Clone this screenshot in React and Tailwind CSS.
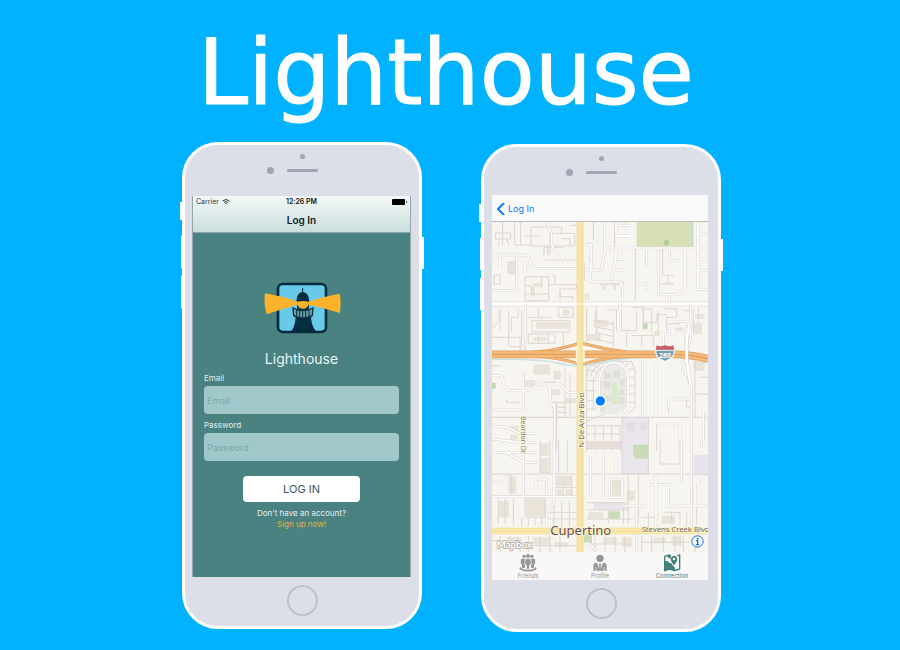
import React from "react";

const PARK = "M470 244H638V318H470Z";

function Roads({ d, width = 8 }) {
  return (
    <g fill="none" strokeLinejoin="round">
      <path d={d} stroke="#d8cfd0" strokeWidth={width} />
      <path d={d} stroke="#ffffff" strokeWidth={width - 3} />
    </g>
  );
}

function Lots({ d }) {
  return <path d={d} fill="none" stroke="#e0d4d2" strokeWidth="3" />;
}

function Buildings({ d }) {
  return <path d={d} fill="#e9e3da" />;
}

function CityMap() {
  return (
    <svg viewBox="36 244 648 990" className="block w-full" role="img" aria-label="Map of Cupertino">
      <defs>
        <pattern id="grass" width="14" height="14" patternUnits="userSpaceOnUse">
          <path d="M0 0H14V14H0Z" fill="#d9e1b8" />
          <path d="M1 3h4M8 6h4M3 11h3M10 12h3" stroke="#c9d6a6" strokeWidth="2" />
        </pattern>
      </defs>
      <path d="M36 244H684V1236H36Z" fill="#f7f5f0" />

      <path d={PARK} fill="url(#grass)" />
      <path d="M638 244V318" stroke="#b9dbe0" strokeWidth="5" />
      <circle cx="559" cy="306" r="8" fill="#afcc96" />

      {/* north of the cross street */}
      <Buildings d="M160 427h27v11h-27zM153 440h12v28h-12zM86 364h18v34H86zM200 322h12v22h-12zM248 506h20v18h-20zM358 427h28v8h-10v14h-8v-14h-10zM390 427h28v8h-10v14h-8v-14h-10zM540 426h42v7h-42zM645 520h28v14h-28z" />
      <Lots d="M46 277h46v18H46zM60 295l-6 22M80 295l8 22M68 244V315M104 244V313H122V244M153 259H245V278H284V316H153ZM135 286H177M123 313H152M210 316V278H245M244 294H270V316M272 254H290M192 348V320H250M194 358H290M42 403H60V430H42ZM84 364H105V398H84ZM135 408H206V480H135ZM206 460H135M138 435H154V460M185 408V440M206 432H290V445H240V468H278V485M216 404H224V432M240 452V486M313 366V420M320 390H366M376 244V317M340 244V300M466 322V480M404 244V320M374 330L362 382M335 320L328 365M430 420V484M420 244H445M548 326V404H582M564 404V430M60 505V570M115 505V530H94V575M135 490V530H215M175 505V530M236 500H280V530H236ZM316 462H326V476H316ZM350 495V575M380 508H410V575M455 500H490V570M484 505H515V575M535 510V575M550 504H590V530H560V575M610 510H640V575M655 500V575M320 500V575M36 590H120V640H36M135 600V650" />
      <Roads d="M36 343H140Q150 346 150 370L162 384H295M60 346V382M110 346V450H36M135 372V400M200 244L215 280V310Q218 326 235 335Q256 345 256 378M374 244V322H684M408 244V284H450M408 254H450M408 288H450M316 346H334V312H316M335 346L330 420L345 424H420L428 432V484M376 322L364 388H320M408 324V345L395 420M408 356H435M402 388H435M500 322V380M470 430H500V450M535 322V462H592L615 442V324M568 322V360H590V355M568 462V484M654 322V446H684M654 355H684M654 390H684M654 244V320M654 280H684" />
      <Roads width={13} d="M36 490H684" />
      <Roads d="M420 490V508H414V575M632 490V590L606 700M136 490V600" />

      {/* around the freeway */}
      <g transform="translate(0 510)">
        <Buildings d="M168 34h98v20h-98zM160 80h40v10h-40zM160 162h50v30h-50zM220 180h24v26h-24zM135 208h30v22h-30zM190 212h40v10h-40zM208 236h32v18h-32zM258 262h30v16h-30zM90 345h26v16H90zM90 372h24v18H90zM340 28h45v20h-45zM322 70h40v20h-40zM522 60h18v16h-18zM586 50h24v12h-24zM642 36h24v34h-24zM640 150h34v30h-34z" />
        <Lots d="M86 0V105M58 0V30L36 55M125 0V108H86M145 70H225V98H145ZM175 70V98M205 70V98M156 30H270V64H156ZM250 64V104M320 0V108M345 0L345 30L400 40M345 48L400 60M345 65L400 78M345 85L400 98M400 30V108M425 0V60H470V0M440 60V108M455 75H520V108M485 75V108M490 0V35H530V12H560M560 40H600M36 320H684M255 165V320M270 190V320M215 275H260M215 290H260M215 305H260M215 320H260M230 275V420M320 160V420M505 320V420M645 150V320M660 200H684M645 250H684M530 340V420M600 340V420M320 345H420V420M320 370H420M320 395H420M345 345V420M370 345V420M395 345V420M566 310V265H634M620 265V290H634M80 265V275H120M36 165H60M320 332L400 300" />
        <path d="M360 310L362 210Q370 160 400 160Q438 162 442 210V285L410 312Z" fill="#ebeae6" />
        <path d="M396 215h16v66h-16zM362 250h12v50h-12z" fill="#dbe8ca" />
        <path d="M372 185h20v20h-20zM400 180h20v22h-20zM420 205h14v22h-14zM370 212h22v22h-22zM416 235h16v18h-16zM415 260h18v20h-18zM376 255h18v16h-18z" fill="#dfe0dc" />
        <Lots d="M320 200Q325 155 360 152H455L465 180V290L445 310M330 200Q340 165 375 155M345 202Q352 170 385 160M320 210H350M320 240H350M320 270H350M320 295H350M340 200V300M320 175L350 185M330 160L358 172M445 175H462M445 200H462M445 225H462M445 250H462M445 275H462M430 155L425 165M445 155L435 170" />
        <Roads d="M358 300V210Q365 155 402 155Q442 158 444 210V285L430 308" />
        <path d="M426 320H505V490H426Z" fill="#ebe6ee" />
        <path d="M426 320H505V490H426Z" fill="none" stroke="#ddd3e0" strokeWidth="3" />
        <path d="M440 335h25v25h-25zM480 335h18v25h-18z" fill="#e2dee3" />
        <path d="M460 402h42v40h-36l-6-8zM488 38h15v16h-15zM36 216h11v18H36z" fill="#c3d9b4" />
        <Roads d="M36 195H60Q72 200 72 225L85 240H150Q165 230 170 220H240L265 245H290M130 185V300M36 298H130M36 346L80 350L130 372M130 368H170M36 385L120 395M130 395H165M210 228V270L224 290V420M488 150V320M528 150V320M566 290V265H634M550 108V72H568V50M606 150L628 215L634 230V420M628 40L616 60V120M580 32H620M670 300V390M600 340V420M530 340H600" />
        <path d="M36 146Q180 144 240 158Q300 174 350 158Q460 136 540 137Q620 136 684 155" fill="none" stroke="#c9e1e2" strokeWidth="5" />
        <path d="M160 124Q230 120 302 97Q370 115 440 124M160 137Q230 138 302 162Q370 142 440 137" fill="none" stroke="#df9d5d" strokeWidth="9" />
        <path d="M160 124Q230 120 302 97Q370 115 440 124M160 137Q230 138 302 162Q370 142 440 137" fill="none" stroke="#f4b978" strokeWidth="5" />
        <path d="M36 131H520Q620 128 684 144" fill="none" stroke="#e0a060" strokeWidth="23" />
        <path d="M36 131H520Q620 128 684 144" fill="none" stroke="#f4b978" strokeWidth="19" />
        <path d="M36 131H520Q620 128 684 144" fill="none" stroke="#dc995c" strokeWidth="3" />
        <Roads width={11} d="M628 40L620 90V150L632 225" />
      </g>

      {/* downtown */}
      <g transform="translate(0 900)">
        <Buildings d="M180 8h26v38h-26zM180 52h26v42h-26zM228 106h20v30h-20zM252 106h22v30h-22zM138 172h58v55h-58zM85 108h24v50H85zM55 180h32v50H55zM230 145h18v24h-18zM256 145h22v24h-22zM325 215h45v18h-45zM395 115h28v55h-28zM440 150h25v30h-25zM545 225h40v24h-40zM80 290h45v30H80zM160 290h52v22h-52zM225 305h40v14h-40zM370 290h40v18h-40zM425 290h30v28h-30zM520 290h36v18h-36zM575 285h30v30h-30zM320 0h98v22h-98z" />
        <path d="M340 186H434V208H340ZM640 42H684V104H640Z" fill="#e9e3ec" />
        <path d="M462 12h42v42h-36l-6-8zM386 212h34v22h-34zM312 282h24v24h-24z" fill="#c9dbb6" />
        <Lots d="M36 100H684M180 0V96H210V0M236 0V100M262 0V96M320 0V24H422V0M320 8H422M320 16H422M505 0V100M540 0V70H600V0M634 0V260M75 104H95V170M55 172V250M75 172V250M100 172V255M135 170H196V230H135ZM125 230V255M145 230V255M165 230V255M185 230V255M205 215H290M205 235H290M222 180V260M245 180V260M268 180V260M222 140H290M250 104V170M275 104V170M320 186H440V208H320M320 235H460M385 208V250M430 208V250M445 104V250M475 104V250M485 230H530V258M505 215V258M550 215H600V250M575 215V250M620 215V260M650 200V250M36 300H120V335M60 285V335M90 285V335M145 285V335M145 315H290M180 285V335M210 285V335M240 285V335M345 285V335M320 310H460M375 285V335M405 285V335M435 285V335M485 285V335M485 305H630M515 285V335M550 285V335M585 285V335M610 285V335M645 285V335" />
        <Roads d="M36 35H170M80 35L130 65H170M130 0V165M36 168H295M36 124H65M222 0V185L200 220V255M168 150V115H200V160M332 48V170M370 48V170M408 48V100M388 115V170H426V115H388M434 196H498M510 132H565V196H684M528 104V255M604 0V125M634 0V280M645 125V196M665 110V130M470 210V330M320 305L350 330M665 0V20" />
        <path d="M36 271H684" stroke="#e6d595" strokeWidth="20" />
        <path d="M36 271H684" stroke="#fbe9aa" strokeWidth="16" />
        <path d="M36 271H684" stroke="#ead58c" strokeWidth="2" />
      </g>

      <path d="M300 244V1236" stroke="#e8d596" strokeWidth="20" />
      <path d="M300 244V1236" stroke="#fbe8a8" strokeWidth="16" />
      <path d="M300 244V1236M306 244V1236" stroke="#ead58d" strokeWidth="1" />
      <path d="M292 490H308M290 616V666M312 616V666" stroke="#fff8d8" strokeWidth="5" />

      {/* route shield */}
      <g stroke="#f7f5f0" strokeWidth="4">
        <path d="M530 615Q542 622 555 614Q568 622 580 615Q589 640 572 654L555 663L538 654Q521 640 530 615Z" fill="#6fa1b6" />
        <path d="M530 614Q542 620 555 613Q568 620 580 614L583 628H527Z" fill="#c85d68" stroke="none" />
        <path d="M526 629H584" strokeWidth="3" />
      </g>
      <text x="555" y="651" textAnchor="middle" fill="#ffffff" fontSize="21" className="font-['Open_Sans',sans-serif] font-bold">280</text>

      <g className="font-['Noto_Sans',sans-serif]" stroke="#fbf6df" strokeWidth="4" paintOrder="stroke">
        <text transform="translate(312 921) rotate(-90)" fontSize="23" fill="#766b4e">N De Anza Blvd</text>
        <text transform="translate(124 826) rotate(90)" fontSize="21" fill="#8b8368">Beardon Dr</text>
        <text x="211" y="1182" fontSize="39" fill="#694c50">Cupertino</text>
        <text x="485" y="1175" fontSize="23" fill="#766b4e">Stevens Creek Blvd</text>
      </g>
      <text x="50" y="1223" fontSize="29" fill="#ffffff" stroke="#aaa7a2" strokeWidth="4" paintOrder="stroke" className="font-['Lato',sans-serif] font-bold">Mapbox</text>

      <circle cx="361" cy="781" r="19" fill="#ffffff" stroke="#e2e2e2" strokeWidth="1" />
      <circle cx="361" cy="781" r="14" fill="#087dff" />
    </svg>
  );
}

function LighthouseLogo() {
  return (
    <svg viewBox="0 0 240 156" className="block h-[52px] w-20" aria-hidden="true">
      <rect x="48" y="6" width="144" height="144" rx="14" fill="#68cae8" stroke="#052d40" strokeWidth="8" />
      <path d="M88 148Q101 130 101 102H147Q147 130 162 148Z" fill="#052d40" />
      <path d="M122 18V34" stroke="#052d40" strokeWidth="3" />
      <path d="M103 58Q104 32 122 30Q141 32 142 58Z" fill="#052d40" />
      <path d="M105 56H141V84H105Z" fill="#10394a" />
      <path d="M93 78Q122 94 153 78L151 101Q122 116 95 101Z" fill="#6a9fa5" stroke="#052d40" strokeWidth="4" />
      <path d="M104 84V105M113 87V108M122 88V109M131 87V108M141 84V105" stroke="#052d40" strokeWidth="3" />
      <path d="M9 34Q60 42 108 59Q123 55 138 59Q190 43 233 35Q239 64 233 93Q185 77 140 68Q134 80 123 80Q112 80 106 68Q62 80 14 97Q4 65 9 34Z" fill="#fcb32b" />
    </svg>
  );
}

function Phone({ label, offset, children }) {
  return (
    <section aria-label={label} className={`relative w-60 rounded-[36px] border-[3px] border-white bg-[#dcdfe7] ${offset}`}>
      <span className="absolute -left-[5px] top-[57px] h-[18px] w-0.5 bg-[#effaf8]" />
      <span className="absolute -left-1 top-[91px] h-8 w-0.5 bg-white" />
      <span className="absolute -left-1 top-[131px] h-8 w-0.5 bg-white" />
      <span className="absolute -right-[5px] top-[92px] h-8 w-0.5 bg-white" />
      <div className="flex h-[51px] flex-col items-center">
        <span className="mt-[9px] size-[5px] rounded-full bg-[#a1a4b3]" />
        <div className="mt-2 grid w-24 grid-cols-[1fr_auto_1fr] items-center">
          <span className="mr-[13px] size-[7px] justify-self-end rounded-full bg-[#a1a4b3]" />
          <span className="h-[3px] w-[31px] rounded-full bg-[#a1a4b3]" />
        </div>
      </div>
      {children}
      <div className="flex h-[49px] items-start justify-center pt-2">
        <button type="button" aria-label="Home" className="size-[31px] rounded-full border-2 border-[#bec0ce]" />
      </div>
    </section>
  );
}

function Field({ label, type, id }) {
  return (
    <div className="flex flex-col">
      <label htmlFor={id} className="h-4 text-[8px] leading-4 text-[#e1eeee]">{label}</label>
      <input id={id} type={type} placeholder={label} className="h-7 w-full rounded-[4px] bg-[#a0c7ca] px-[3px] text-[9px] text-[#315d60] outline-none placeholder:text-[#7da8aa]" />
    </div>
  );
}

function LoginScreen() {
  return (
    <div className="ml-[7px] mr-2 border-x border-[#91a9ad] bg-[#4a8282]">
      <header className="h-[37px] border-b border-[#8aa9aa] bg-gradient-to-b from-[#f3f8f7] to-[#c9dedd] text-[#111a1d]">
        <div className="grid h-3 grid-cols-3 items-center px-[3px] text-[7px] leading-3">
          <span className="flex items-center gap-[3px] text-[#30383b]">
            Carrier
            <svg viewBox="0 0 16 12" className="h-[6px] w-2" fill="none" stroke="currentColor" strokeWidth="2" aria-hidden="true">
              <path d="M1 4Q8-2 15 4M4 7Q8 3 12 7" />
              <path d="M6 9L8 11L10 9Q8 7 6 9Z" fill="currentColor" stroke="none" />
            </svg>
          </span>
          <span className="text-center font-semibold">12:26 PM</span>
          <svg viewBox="0 0 15 6" className="h-[6px] w-[15px] justify-self-end" aria-hidden="true">
            <rect width="13" height="6" rx="1" />
            <path d="M14 2Q16 3 14 4Z" />
          </svg>
        </div>
        <h2 className="text-center text-[10px] font-semibold leading-6">Log In</h2>
      </header>
      <div className="flex flex-col items-center px-[11px] pb-[47px] pt-[49px]">
        <LighthouseLogo />
        <p className="mt-[15px] text-[14px] leading-5 text-[#e9f4f3]">Lighthouse</p>
        <form className="mt-px flex w-full flex-col items-center" onSubmit={(e) => e.preventDefault()}>
          <div className="flex w-full flex-col gap-[3px]">
            <Field id="email" type="email" label="Email" />
            <Field id="password" type="password" label="Password" />
          </div>
          <button type="submit" className="mt-[15px] h-[26px] w-[117px] rounded-[4px] bg-white text-[11px] text-[#365663]">LOG IN</button>
        </form>
        <p className="mt-[6px] text-[8px] leading-[11px] text-[#e4f0ef]">Don&apos;t have an account?</p>
        <a href="#signup" className="text-[8px] leading-[11px] text-[#e6b23d]">Sign up now!</a>
      </div>
    </div>
  );
}

function FriendsIcon() {
  return (
    <svg viewBox="0 0 54 54" className="size-[18px]" fill="currentColor" aria-hidden="true">
      <circle cx="15" cy="7" r="5" /><circle cx="39" cy="7" r="5" /><circle cx="27" cy="6" r="6" />
      <path d="M6 14h13v15l-2 13h-7L8 29H5zM35 14h13l1 15h-3l-2 13h-7l-2-13z" />
      <path d="M19 14h16l2 17h-4l-2 14h-8l-2-14h-4z" stroke="#f9f8f6" strokeWidth="2" />
      <path d="M6 39Q-3 44 5 48Q27 57 49 48Q57 44 48 39Q48 47 27 47Q7 47 6 39Z" />
    </svg>
  );
}

function ProfileIcon() {
  return (
    <svg viewBox="0 0 54 54" className="size-[18px]" fill="currentColor" aria-hidden="true">
      <circle cx="27" cy="13" r="11" />
      <path d="M7 34Q8 26 18 26L25 45L24 30L27 27L30 30L29 45L36 26Q47 27 47 35V50H7Z" />
      <path d="M15 39V50M39 39V50" stroke="#f9f8f6" strokeWidth="2" />
    </svg>
  );
}

function ConnectionIcon() {
  return (
    <svg viewBox="0 0 54 54" className="size-[18px]" fill="currentColor" aria-hidden="true">
      <path d="M5 7V50L19 45L35 50L50 45V3L42 6M5 7L19 3L24 6" fill="none" stroke="currentColor" strokeWidth="4" />
      <path d="M5 22Q15 18 19 27Q27 25 28 34Q37 38 36 50L19 45L5 50Z" />
      <path d="M14 3L24 5L22 14L14 10Z" />
      <path d="M33 34Q21 20 24 11Q33 0 42 11Q45 20 33 34ZM33 11A4 4 0 1 0 33 19A4 4 0 1 0 33 11Z" fillRule="evenodd" />
    </svg>
  );
}

function Tab({ icon, children, active }) {
  return (
    <button type="button" aria-current={active ? "page" : undefined} className={`flex flex-col items-center pt-[2px] text-[6px] leading-[8px] ${active ? "text-[#3f7f7c]" : "text-[#969696]"}`}>
      {icon}
      {children}
    </button>
  );
}

function MapScreen() {
  return (
    <div className="ml-2 mr-[10px] mt-[-3px] overflow-hidden bg-[#f9f8f6]">
      <nav className="flex h-[27px] items-center border-b border-[#bdbcbb] bg-[#f9f9f9] px-[5px] pt-0.5">
        <a href="#login" className="flex items-center gap-[3px] text-[9px] text-[#087cff]">
          <svg viewBox="0 0 8 12" className="h-3 w-2" fill="none" stroke="currentColor" strokeWidth="2" aria-hidden="true">
            <path d="M7 0L1 6L7 12" />
          </svg>
          Log In
        </a>
      </nav>
      <div className="relative">
        <CityMap />
        <button type="button" aria-label="Map information" className="absolute bottom-1 right-1 size-[13px] text-[#1674dc]">
          <svg viewBox="0 0 39 39" fill="none" stroke="currentColor" strokeWidth="3" aria-hidden="true">
            <circle cx="19.5" cy="19.5" r="17" fill="#ffffff" fillOpacity="0.5" />
            <circle cx="20" cy="11" r="3" fill="currentColor" stroke="none" />
            <path d="M15 17H20V29M15 29H25" strokeWidth="4" />
          </svg>
        </button>
      </div>
      <div className="grid h-7 grid-cols-3">
        <Tab icon={<FriendsIcon />}>Friends</Tab>
        <Tab icon={<ProfileIcon />}>Profile</Tab>
        <Tab active icon={<ConnectionIcon />}>Connection</Tab>
      </div>
    </div>
  );
}

export default function App() {
  return (
    <main className="min-h-screen bg-[#00b2ff] font-['Inter',sans-serif]">
      <h1 className="pr-2 pt-[17px] text-center font-['DejaVu_Sans',sans-serif] text-[90px] leading-[112px] text-white [-webkit-text-stroke:1px_white]">Lighthouse</h1>
      <div className="flex items-start justify-center gap-[59px] pb-4 pl-[3px] pt-[13px]">
        <Phone label="Login preview" offset="mt-0">
          <LoginScreen />
        </Phone>
        <Phone label="Map preview" offset="mt-0.5">
          <MapScreen />
        </Phone>
      </div>
    </main>
  );
}
